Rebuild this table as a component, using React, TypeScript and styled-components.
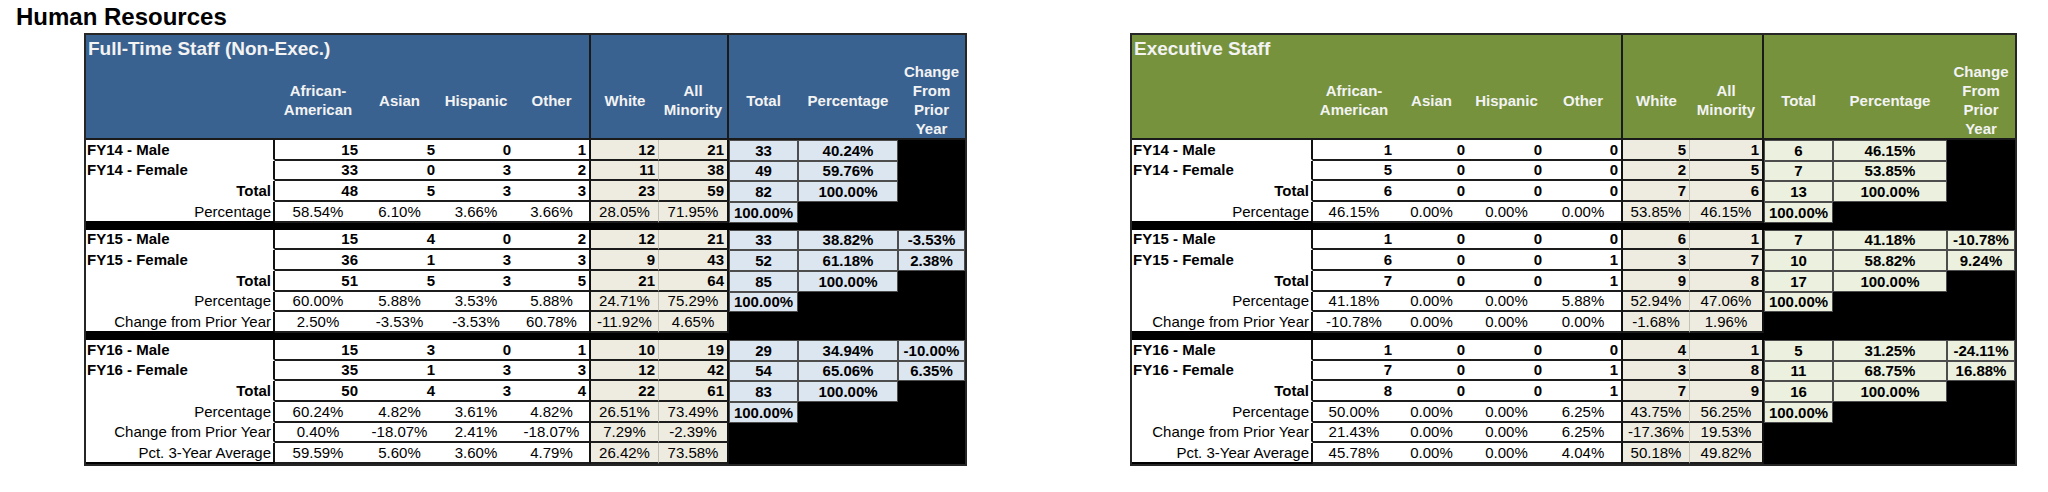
import React from "react";
import styled, { createGlobalStyle } from "styled-components";

type Kind = "group" | "total" | "stat";

type Line = {
  label: string;
  kind: Kind;
  figs: string[];
  total?: string;
  pct?: string;
  change?: string;
};

type Sheet = {
  title: string;
  cols: string;
  band: string;
  fill: string;
  sections: Line[][];
};

const GlobalStyle = createGlobalStyle`
  html, body {
    margin: 0;
    padding: 0;
    background: #fff;
  }
  body {
    font-family: "Liberation Sans", Arial, Helvetica, sans-serif;
    color: #000;
  }
`;

const Page = styled.div`
  width: 2048px;
  box-sizing: border-box;
  padding: 3px 0 0 16px;
`;

const PageTitle = styled.h1`
  margin: 0;
  font-size: 24px;
  line-height: 28px;
  font-weight: 700;
`;

const Tables = styled.div`
  display: flex;
  align-items: flex-start;
  gap: 163px;
  margin: 2px 0 0 68px;
`;

const Frame = styled.div<{ $cols: string }>`
  --cols: ${(p) => p.$cols};
  display: flex;
  flex-direction: column;
  border: 2px solid #262626;
  background: #000;
  font-size: 15px;
`;

const Header = styled.div<{ $band: string }>`
  display: grid;
  grid-template-columns: var(--cols);
  grid-template-rows: 27px 76px;
  background: ${(p) => p.$band};
  border-bottom: 2px solid #1a1a1a;
  color: #f3f3f3;
  font-weight: 700;
`;

const HeaderTitle = styled.div`
  grid-row: 1;
  grid-column: 1 / 6;
  font-size: 19px;
  line-height: 24px;
  padding: 2px 0 0 2px;
  white-space: nowrap;
`;

const HeaderLabel = styled.div<{ $col: number; $edge?: boolean }>`
  grid-row: 1 / 3;
  grid-column: ${(p) => p.$col};
  padding-top: 27px;
  display: flex;
  align-items: center;
  justify-content: center;
  text-align: center;
  line-height: 19px;
  border-right: ${(p) => (p.$edge ? "2px solid #1a1a1a" : "none")};
`;

const Row = styled.div`
  display: grid;
  grid-template-columns: var(--cols);
  height: 20.67px;
`;

const Label = styled.div<{ $bold: boolean; $align: "left" | "right" }>`
  background: #fff;
  border-right: 2px solid #111;
  border-bottom: 2px solid transparent;
  display: flex;
  align-items: center;
  justify-content: ${(p) => (p.$align === "left" ? "flex-start" : "flex-end")};
  padding: 0 2px 0 1px;
  font-weight: ${(p) => (p.$bold ? 700 : 400)};
  white-space: nowrap;
`;

const Figure = styled.div<{
  $tone: "plain" | "tan";
  $align: "right" | "center";
  $bold: boolean;
  $edge?: "hard" | "soft";
}>`
  background: ${(p) => (p.$tone === "tan" ? "#eeece1" : "#fff")};
  border-bottom: 2px solid #1c1c1c;
  border-right: ${(p) =>
    p.$edge === "hard" ? "2px solid #111" : p.$edge === "soft" ? "1px solid #c4c2b5" : "none"};
  display: flex;
  align-items: center;
  justify-content: ${(p) => (p.$align === "right" ? "flex-end" : "center")};
  padding: 0 3px;
  font-weight: ${(p) => (p.$bold ? 700 : 400)};
  white-space: nowrap;
`;

const Summary = styled.div<{ $fill: string }>`
  background: ${(p) => p.$fill};
  border: 1px solid #4d4d4d;
  display: flex;
  align-items: center;
  justify-content: center;
  font-weight: 700;
  white-space: nowrap;
`;

const Void = styled.div``;

const Section = styled.div`
  display: flex;
  flex-direction: column;
  & > ${Row}:last-child ${Label} {
    border-bottom-color: #000;
  }
`;

const Divider = styled.div`
  height: 7px;
`;

const g = (label: string, figs: string[], total: string, pct: string, change?: string): Line => ({
  label,
  kind: "group",
  figs,
  total,
  pct,
  change,
});

const t = (figs: string[], total: string, pct: string): Line => ({
  label: "Total",
  kind: "total",
  figs,
  total,
  pct,
});

const s = (label: string, figs: string[], total?: string): Line => ({
  label,
  kind: "stat",
  figs,
  total,
});

const sheets: Sheet[] = [
  {
    title: "Full-Time Staff (Non-Exec.)",
    cols: "189px 86px 77px 76px 77px 68px 70px 69px 100px 67px",
    band: "#3a6291",
    fill: "#dce6f1",
    sections: [
      [
        g("FY14 - Male", ["15", "5", "0", "1", "12", "21"], "33", "40.24%"),
        g("FY14 - Female", ["33", "0", "3", "2", "11", "38"], "49", "59.76%"),
        t(["48", "5", "3", "3", "23", "59"], "82", "100.00%"),
        s("Percentage", ["58.54%", "6.10%", "3.66%", "3.66%", "28.05%", "71.95%"], "100.00%"),
      ],
      [
        g("FY15 - Male", ["15", "4", "0", "2", "12", "21"], "33", "38.82%", "-3.53%"),
        g("FY15 - Female", ["36", "1", "3", "3", "9", "43"], "52", "61.18%", "2.38%"),
        t(["51", "5", "3", "5", "21", "64"], "85", "100.00%"),
        s("Percentage", ["60.00%", "5.88%", "3.53%", "5.88%", "24.71%", "75.29%"], "100.00%"),
        s("Change from Prior Year", ["2.50%", "-3.53%", "-3.53%", "60.78%", "-11.92%", "4.65%"]),
      ],
      [
        g("FY16 - Male", ["15", "3", "0", "1", "10", "19"], "29", "34.94%", "-10.00%"),
        g("FY16 - Female", ["35", "1", "3", "3", "12", "42"], "54", "65.06%", "6.35%"),
        t(["50", "4", "3", "4", "22", "61"], "83", "100.00%"),
        s("Percentage", ["60.24%", "4.82%", "3.61%", "4.82%", "26.51%", "73.49%"], "100.00%"),
        s("Change from Prior Year", ["0.40%", "-18.07%", "2.41%", "-18.07%", "7.29%", "-2.39%"]),
        s("Pct. 3-Year Average", ["59.59%", "5.60%", "3.60%", "4.79%", "26.42%", "73.58%"]),
      ],
    ],
  },
  {
    title: "Executive Staff",
    cols: "181px 82px 73px 77px 78px 67px 74px 69px 114px 68px",
    band: "#76923c",
    fill: "#ebf1de",
    sections: [
      [
        g("FY14 - Male", ["1", "0", "0", "0", "5", "1"], "6", "46.15%"),
        g("FY14 - Female", ["5", "0", "0", "0", "2", "5"], "7", "53.85%"),
        t(["6", "0", "0", "0", "7", "6"], "13", "100.00%"),
        s("Percentage", ["46.15%", "0.00%", "0.00%", "0.00%", "53.85%", "46.15%"], "100.00%"),
      ],
      [
        g("FY15 - Male", ["1", "0", "0", "0", "6", "1"], "7", "41.18%", "-10.78%"),
        g("FY15 - Female", ["6", "0", "0", "1", "3", "7"], "10", "58.82%", "9.24%"),
        t(["7", "0", "0", "1", "9", "8"], "17", "100.00%"),
        s("Percentage", ["41.18%", "0.00%", "0.00%", "5.88%", "52.94%", "47.06%"], "100.00%"),
        s("Change from Prior Year", ["-10.78%", "0.00%", "0.00%", "0.00%", "-1.68%", "1.96%"]),
      ],
      [
        g("FY16 - Male", ["1", "0", "0", "0", "4", "1"], "5", "31.25%", "-24.11%"),
        g("FY16 - Female", ["7", "0", "0", "1", "3", "8"], "11", "68.75%", "16.88%"),
        t(["8", "0", "0", "1", "7", "9"], "16", "100.00%"),
        s("Percentage", ["50.00%", "0.00%", "0.00%", "6.25%", "43.75%", "56.25%"], "100.00%"),
        s("Change from Prior Year", ["21.43%", "0.00%", "0.00%", "6.25%", "-17.36%", "19.53%"]),
        s("Pct. 3-Year Average", ["45.78%", "0.00%", "0.00%", "4.04%", "50.18%", "49.82%"]),
      ],
    ],
  },
];

const headings: { text: React.ReactNode; edge?: boolean }[] = [
  { text: <>African-<br />American</> },
  { text: "Asian" },
  { text: "Hispanic" },
  { text: "Other", edge: true },
  { text: "White" },
  { text: <>All<br />Minority</>, edge: true },
  { text: "Total" },
  { text: "Percentage" },
  { text: <>Change<br />From<br />Prior<br />Year</> },
];

const DataRow = ({ line, fill }: { line: Line; fill: string }) => {
  const stat = line.kind === "stat";
  return (
    <Row>
      <Label $bold={!stat} $align={line.kind === "group" ? "left" : "right"}>
        {line.label}
      </Label>
      {line.figs.map((v, i) => (
        <Figure
          key={i}
          $tone={i < 4 ? "plain" : "tan"}
          $align={stat ? "center" : "right"}
          $bold={!stat}
          $edge={i === 3 || i === 5 ? "hard" : i === 4 ? "soft" : undefined}
        >
          {v}
        </Figure>
      ))}
      {[line.total, line.pct, line.change].map((v, i) =>
        v ? (
          <Summary key={i} $fill={fill}>
            {v}
          </Summary>
        ) : (
          <Void key={i} />
        )
      )}
    </Row>
  );
};

const StaffTable = ({ sheet }: { sheet: Sheet }) => (
  <Frame $cols={sheet.cols}>
    <Header $band={sheet.band}>
      <HeaderTitle>{sheet.title}</HeaderTitle>
      {headings.map((h, i) => (
        <HeaderLabel key={i} $col={i + 2} $edge={h.edge}>
          {h.text}
        </HeaderLabel>
      ))}
    </Header>
    {sheet.sections.map((lines, si) => (
      <React.Fragment key={si}>
        {si > 0 && <Divider />}
        <Section>
          {lines.map((line, li) => (
            <DataRow key={li} line={line} fill={sheet.fill} />
          ))}
        </Section>
      </React.Fragment>
    ))}
  </Frame>
);

const App = () => (
  <>
    <GlobalStyle />
    <Page>
      <PageTitle>Human Resources</PageTitle>
      <Tables>
        {sheets.map((sheet) => (
          <StaffTable key={sheet.title} sheet={sheet} />
        ))}
      </Tables>
    </Page>
  </>
);

export default App;
